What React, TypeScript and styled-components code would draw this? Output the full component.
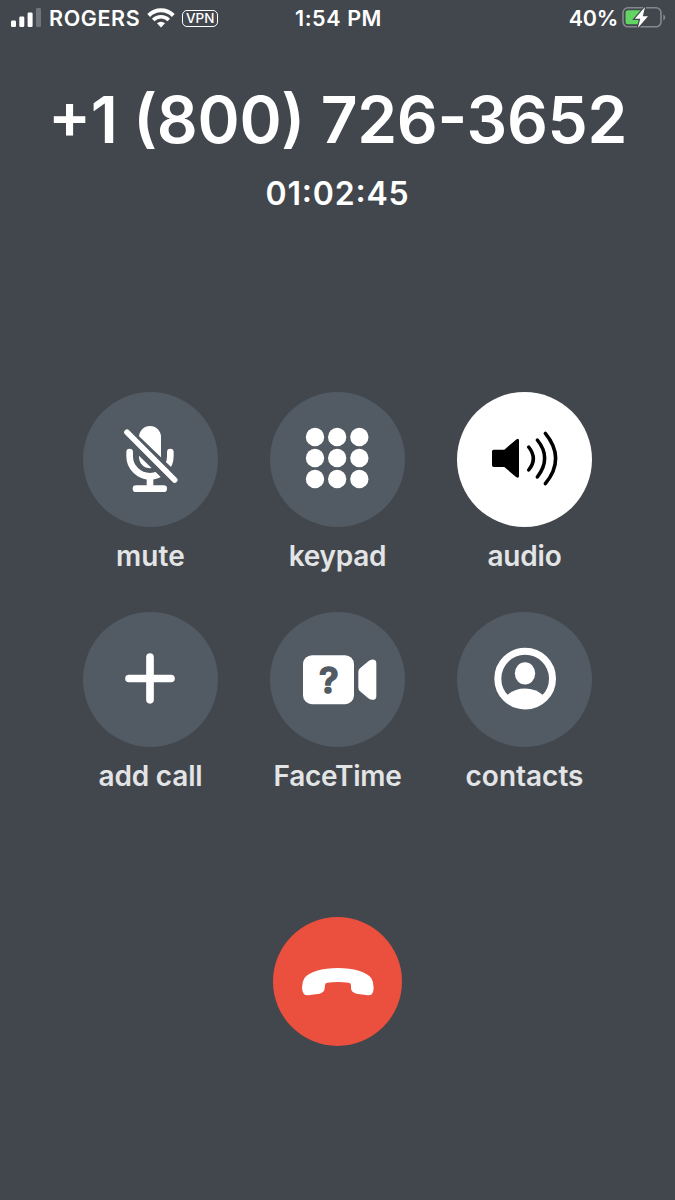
import React from "react";
import styled, { createGlobalStyle } from "styled-components";

const color = {
  background: "#42474d",
  key: "#525a63",
  label: "#e3e4e5",
  green: "#62d464",
  red: "#eb4f3d",
  outline: "#85898e",
};

const GlobalStyle = createGlobalStyle`
  *, *::before, *::after { box-sizing: border-box; }
  body {
    margin: 0;
    background: ${color.background};
    color: #fff;
    font-family: Inter, "Liberation Sans", sans-serif;
  }
`;

const Screen = styled.main`
  display: flex;
  flex-direction: column;
  align-items: center;
  width: 675px;
  height: 1200px;
  overflow: hidden;
  background: ${color.background};
`;

const StatusBar = styled.header`
  display: grid;
  grid-template-columns: 1fr auto 1fr;
  align-items: center;
  width: 100%;
  height: 36px;
  padding: 0 9px 0 11px;
  font-size: 21.5px;
  font-weight: 600;
  line-height: 36px;
  white-space: nowrap;
`;

const StatusGroup = styled.div<{ $end?: boolean }>`
  display: flex;
  align-items: center;
  justify-content: ${(p) => (p.$end ? "flex-end" : "flex-start")};
`;

const StatusText = styled.span<{ $spacing?: string }>`
  letter-spacing: ${(p) => p.$spacing ?? "0"};
`;

const Carrier = styled(StatusText)`
  margin: 0 7px 0 7px;
`;

const VpnBadge = styled.span`
  width: 36px;
  height: 17px;
  margin-left: 7px;
  border: 1.5px solid #fff;
  border-radius: 5px;
  font-size: 13.5px;
  font-weight: 500;
  line-height: 15px;
  text-align: center;
`;

const Icon = styled.svg`
  display: block;
  flex: none;
`;

const BatteryIcon = styled(Icon)`
  margin-left: 4px;
`;

const Caller = styled.h1`
  margin: 44px 0 0;
  font-size: 64px;
  font-weight: 600;
  line-height: 80px;
  letter-spacing: -0.3px;
  font-feature-settings: "case";
  white-space: nowrap;
`;

const Timer = styled.p`
  margin: 14px 0 0;
  font-size: 32px;
  font-weight: 600;
  line-height: 40px;
  letter-spacing: 0.8px;
  font-feature-settings: "case";
`;

const Keys = styled.section`
  display: grid;
  grid-template-columns: repeat(3, 135px);
  grid-auto-rows: 219.5px;
  column-gap: 52px;
  margin-top: 178px;
`;

const Key = styled.div`
  display: flex;
  flex-direction: column;
  align-items: center;
`;

const Round = styled.button<{ $fill: string; $size: number }>`
  display: block;
  width: ${(p) => p.$size}px;
  height: ${(p) => p.$size}px;
  flex: none;
  padding: 0;
  border: 0;
  border-radius: 50%;
  background: ${(p) => p.$fill};
  color: #fff;
`;

const KeyLabel = styled.span<{ $spacing: number }>`
  margin-top: 11px;
  color: ${color.label};
  font-size: 28px;
  font-weight: 600;
  line-height: 36px;
  letter-spacing: ${(p) => p.$spacing}px;
  white-space: nowrap;
`;

const Footer = styled.footer`
  margin-top: 85.5px;
`;

const MuteIcon = () => (
  <Icon width="135" height="135" viewBox="24 21 405 405">
    <rect x="192" y="123" width="66" height="127" rx="33" fill="#fff" />
    <path d="M164 201v13a61 60 0 0 0 122 0v-13" fill="none" stroke="#fff" strokeWidth="20" strokeLinecap="round" />
    <path d="M225 274v30" stroke="#fff" strokeWidth="20" />
    <path d="M183 311h83" stroke="#fff" strokeWidth="20" strokeLinecap="round" />
    <path d="M147 154L294 298" stroke={color.key} strokeWidth="20" />
    <path d="M160 131L309 274" stroke={color.key} strokeWidth="12" />
    <path d="M156 142L299 285" stroke="#fff" strokeWidth="17" strokeLinecap="round" />
  </Icon>
);

const KeypadIcon = () => (
  <Icon width="135" height="135" viewBox="24 21 405 405" fill="#fff">
    {[156, 219, 282].map((y) =>
      [159, 225.5, 292].map((x) => <circle key={`${x}-${y}`} cx={x} cy={y} r="27.5" />),
    )}
  </Icon>
);

const AudioIcon = () => (
  <Icon width="135" height="135" viewBox="21 21 405 405">
    <path d="M131 194h32l35-30q9-6 9 3v106q0 9-9 3l-35-30h-32q-5 0-5-5v-42q0-5 5-5Z" fill="#000" />
    <g fill="none" stroke="#000" strokeWidth="10.500" strokeLinecap="round">
      <path d="M236 186q28 35 0 69" />
      <path d="M262 165q44 54 0 111" />
      <path d="M286 145q62 75 0 151" />
    </g>
  </Icon>
);

const AddIcon = () => (
  <Icon width="135" height="135" viewBox="24 19.5 405 405">
    <path d="M225 155v128M162 219h126" stroke="#fff" strokeWidth="23" strokeLinecap="round" />
  </Icon>
);

const FaceTimeIcon = () => (
  <Icon width="135" height="135" viewBox="24 19.5 405 405">
    <rect x="123" y="149" width="153" height="147" rx="27" fill="#fff" />
    <path d="M289 199q0-7 5-11l25-21q6-5 13-5 11 0 11 11v99q0 11-11 11-7 0-13-5l-25-21q-5-4-5-11Z" fill="#fff" />
    <text
      x="200"
      y="261"
      fill={color.key}
      stroke={color.key}
      strokeWidth="5"
      strokeLinejoin="round"
      fontFamily="Inter, sans-serif"
      fontSize="108"
      fontWeight="600"
      textAnchor="middle"
    >
      ?
    </text>
  </Icon>
);

const ContactsIcon = () => (
  <Icon width="135" height="135" viewBox="21 19.5 405 405">
    <circle cx="225.500" cy="219.500" r="82" fill="none" stroke="#fff" strokeWidth="21" />
    <ellipse cx="225" cy="203.500" rx="30.500" ry="33.500" fill="#fff" />
    <path d="M170 270q23-21 55-21t56 21q-20 34-56 34t-55-34Z" fill="#fff" />
  </Icon>
);

const HangUpIcon = () => (
  <Icon width="129.5" height="129.5" viewBox="33 35 388.5 388.5">
    <path
      d="M228 188C274 188 315 199 328 219Q335 230 335 247Q335 271 317 270L283 265Q268 262 267 249L267 240Q267 233 260 232Q228 228 196 232Q189 233 189 240L188 249Q187 262 173 265L139 270Q121 271 120 247Q120 230 127 219C140 199 181 188 228 188Z"
      fill="#fff"
    />
  </Icon>
);

const SignalIcon = () => (
  <Icon width="31" height="20" viewBox="0 0 31 20" fill="#fff">
    <rect x="0" y="12.500" width="5" height="6.500" rx="1.300" />
    <rect x="8.300" y="8.500" width="5" height="10.500" rx="1.300" />
    <rect x="16.600" y="4.500" width="5" height="14.500" rx="1.300" />
    <rect x="25" y="0" width="5" height="19" rx="1.300" opacity=".25" />
  </Icon>
);

const WifiIcon = () => (
  <Icon width="28" height="20" viewBox="0 0 28 20" fill="none" stroke="#fff">
    <path d="M1.700 7.500a17.300 17.300 0 0 1 24.600 0" strokeWidth="4" />
    <path d="M6.200 12a11 11 0 0 1 15.600 0" strokeWidth="3.600" />
    <path d="M14 19.500l-4-4.200a5.700 5.700 0 0 1 8 0Z" fill="#fff" stroke="none" />
  </Icon>
);

const ChargingIcon = () => (
  <BatteryIcon width="44" height="24" viewBox="0 0 44 24">
    <rect x="1" y="1.800" width="38" height="19" rx="5" fill="none" stroke={color.outline} strokeWidth="1.600" />
    <path d="M41.300 8.500v6q2-.8 2-3t-2-3Z" fill={color.outline} />
    <path d="M6 4.300h13v14H6q-2.500 0-2.500-2.500v-9Q3.500 4.300 6 4.300Z" fill={color.green} />
    <path
      d="M23 1L12.800 12.700h5.500L15.800 22 26 10.200h-5.200Z"
      fill="#fff"
      stroke={color.background}
      strokeWidth="2.400"
      paintOrder="stroke"
    />
  </BatteryIcon>
);

const keys = [
  { label: "mute", Glyph: MuteIcon, spacing: 0.1 },
  { label: "keypad", Glyph: KeypadIcon, spacing: -0.3 },
  { label: "audio", Glyph: AudioIcon, spacing: -0.2 },
  { label: "add call", Glyph: AddIcon, spacing: -0.2 },
  { label: "FaceTime", Glyph: FaceTimeIcon, spacing: -0.3 },
  { label: "contacts", Glyph: ContactsIcon, spacing: 0 },
];

const activeKey = "audio";

export default function App() {
  return (
    <Screen>
      <GlobalStyle />
      <StatusBar>
        <StatusGroup>
          <SignalIcon />
          <Carrier $spacing="0.6px">ROGERS</Carrier>
          <WifiIcon />
          <VpnBadge>VPN</VpnBadge>
        </StatusGroup>
        <StatusText $spacing="0.6px">1:54 PM</StatusText>
        <StatusGroup $end>
          <StatusText $spacing="-0.3px">40%</StatusText>
          <ChargingIcon />
        </StatusGroup>
      </StatusBar>
      <Caller>+1 (800) 726-3652</Caller>
      <Timer>01:02:45</Timer>
      <Keys>
        {keys.map(({ label, Glyph, spacing }) => (
          <Key key={label}>
            <Round $size={135} $fill={label === activeKey ? "#fff" : color.key} aria-label={label}>
              <Glyph />
            </Round>
            <KeyLabel $spacing={spacing}>{label}</KeyLabel>
          </Key>
        ))}
      </Keys>
      <Footer>
        <Round $size={129.5} $fill={color.red} aria-label="end call">
          <HangUpIcon />
        </Round>
      </Footer>
    </Screen>
  );
}
